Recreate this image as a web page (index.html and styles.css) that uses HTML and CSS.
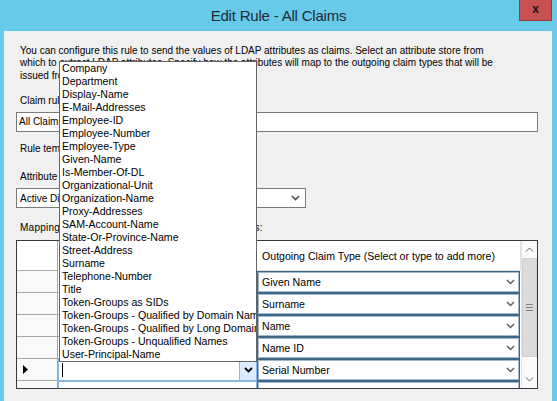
FILE: index.html
```html
<!DOCTYPE html>
<html>
<head>
<meta charset="utf-8">
<link rel="stylesheet" href="styles.css">
</head>
<body>
<div class="window">
  <div class="titlebar">
    <span></span>
    <div class="title">Edit Rule - All Claims</div>
    <div class="close">x</div>
  </div>
  <div class="client">
    <p class="desc">You can configure this rule to send the values of LDAP attributes as claims. Select an attribute store from<br>which to extract LDAP attributes. Specify how the attributes will map to the outgoing claim types that will be<br>issued from the rule.</p>
    <div class="lbl lbl-name">Claim rule name:</div>
    <div class="textbox">All Claims</div>
    <div class="lbl lbl-tmpl">Rule template: Send LDAP Attributes as Claims</div>
    <div class="lbl lbl-store">Attribute store:</div>
    <div class="select"><span>Active Directory</span><svg class="chev" width="9" height="6" viewBox="0 0 9 6"><path d="M1 1 L4.5 4.5 L8 1" fill="none" stroke="#505050" stroke-width="1.6"/></svg></div>
    <div class="lbl lbl-map">Mapping of LDAP attributes to outgoing claim types:</div>
    <div class="grid">
      <div class="table">
        <div class="row head">
          <div class="rh"></div>
          <div class="c1 hc">LDAP Attribute (Select or type to add more)</div>
          <div class="c2 hc">Outgoing Claim Type (Select or type to add more)</div>
        </div>
        <div class="row">
          <div class="rh"></div>
          <div class="c1"><div class="cell">Given-Name</div></div>
          <div class="c2"><div class="combo"><span>Given Name</span><svg class="chev" width="9" height="6" viewBox="0 0 9 6"><path d="M1 1 L4.5 4.5 L8 1" fill="none" stroke="#606060" stroke-width="1.5"/></svg></div></div>
        </div>
        <div class="row">
          <div class="rh"></div>
          <div class="c1"><div class="cell">Surname</div></div>
          <div class="c2"><div class="combo"><span>Surname</span><svg class="chev" width="9" height="6" viewBox="0 0 9 6"><path d="M1 1 L4.5 4.5 L8 1" fill="none" stroke="#606060" stroke-width="1.5"/></svg></div></div>
        </div>
        <div class="row">
          <div class="rh"></div>
          <div class="c1"><div class="cell">Display-Name</div></div>
          <div class="c2"><div class="combo"><span>Name</span><svg class="chev" width="9" height="6" viewBox="0 0 9 6"><path d="M1 1 L4.5 4.5 L8 1" fill="none" stroke="#606060" stroke-width="1.5"/></svg></div></div>
        </div>
        <div class="row">
          <div class="rh"></div>
          <div class="c1"><div class="cell">User-Principal-Name</div></div>
          <div class="c2"><div class="combo"><span>Name ID</span><svg class="chev" width="9" height="6" viewBox="0 0 9 6"><path d="M1 1 L4.5 4.5 L8 1" fill="none" stroke="#606060" stroke-width="1.5"/></svg></div></div>
        </div>
        <div class="row">
          <div class="rh"><svg class="cur" width="6" height="9" viewBox="0 0 6 9"><path d="M0 0 L5 4.5 L0 9 Z" fill="#000"/></svg></div>
          <div class="c1"><div class="cell active"><span class="caret"></span><div class="dbtn"><svg width="9" height="6" viewBox="0 0 9 6"><path d="M1 1 L4.5 4.5 L8 1" fill="none" stroke="#000" stroke-width="1.8"/></svg></div></div></div>
          <div class="c2"><div class="combo"><span>Serial Number</span><svg class="chev" width="9" height="6" viewBox="0 0 9 6"><path d="M1 1 L4.5 4.5 L8 1" fill="none" stroke="#606060" stroke-width="1.5"/></svg></div></div>
        </div>
        <div class="row">
          <div class="rh star">*</div>
          <div class="c1"><div class="cell newrow"></div></div>
          <div class="c2"><div class="combo"></div></div>
        </div>
      </div>
      <div class="vscroll">
        <div class="sbtn"><svg width="9" height="5" viewBox="0 0 9 5"><path d="M1 4.5 L4.5 1 L8 4.5" fill="none" stroke="#606060" stroke-width="1"/></svg></div>
        <div class="thumb"><div class="grip"></div></div>
        <div class="track"></div>
        <div class="sbtn"><svg width="9" height="5" viewBox="0 0 9 5"><path d="M1 0.5 L4.5 4 L8 0.5" fill="none" stroke="#606060" stroke-width="1"/></svg></div>
      </div>
    </div>
    <ul class="droplist">
      <li>Company</li>
      <li>Department</li>
      <li>Display-Name</li>
      <li>E-Mail-Addresses</li>
      <li>Employee-ID</li>
      <li>Employee-Number</li>
      <li>Employee-Type</li>
      <li>Given-Name</li>
      <li>Is-Member-Of-DL</li>
      <li>Organizational-Unit</li>
      <li>Organization-Name</li>
      <li>Proxy-Addresses</li>
      <li>SAM-Account-Name</li>
      <li>State-Or-Province-Name</li>
      <li>Street-Address</li>
      <li>Surname</li>
      <li>Telephone-Number</li>
      <li>Title</li>
      <li>Token-Groups as SIDs</li>
      <li>Token-Groups - Qualified by Domain Name</li>
      <li>Token-Groups - Qualified by Long Domain Name</li>
      <li>Token-Groups - Unqualified Names</li>
      <li>User-Principal-Name</li>
    </ul>
  </div>
</div>
</body>
</html>
```

FILE: styles.css
```css
* { box-sizing: border-box; }
html, body { margin: 0; padding: 0; }
body {
  width: 557px;
  height: 401px;
  overflow: hidden;
  font-family: "Liberation Sans", Arial, sans-serif;
  font-size: 10px;
  color: #000;
}
.window {
  width: 557px;
  height: 401px;
  background: #66cae8;
  display: flex;
  flex-direction: column;
}
.titlebar {
  height: 31px;
  flex: none;
  display: grid;
  grid-template-columns: 1fr auto 1fr;
  align-items: start;
}
.title {
  font-size: 15px;
  color: #1d2b35;
  margin-top: 7px;
  letter-spacing: -0.2px;
}
.close {
  justify-self: end;
  margin-right: 5px;
  width: 33px;
  height: 21px;
  background: #c75050;
  border: 1px solid #983a3a;
  border-top: none;
  color: #151515;
  font-weight: bold;
  font-size: 12px;
  line-height: 18px;
  text-align: center;
}
.client {
  flex: 1;
  margin: 0 5px 0 4px;
  background: #f0f0f0;
  position: relative;
  padding: 13.5px 0 0 12px;
}
.desc {
  margin: 0 0 0 4px;
  line-height: 12.5px;
  white-space: nowrap;
}
.lbl {
  margin-left: 4px;
  line-height: 13px;
  white-space: nowrap;
}
.lbl-name { margin-top: 12px; }
.textbox {
  margin-top: 5px;
  width: 522px;
  height: 20px;
  background: #fff;
  border: 1px solid #7a7a7a;
  padding-left: 2px;
  line-height: 18px;
}
.lbl-tmpl { margin-top: 9.5px; }
.lbl-store { margin-top: 15px; }
.select {
  margin-top: 5.5px;
  width: 290px;
  height: 20px;
  background: #fff;
  border: 1px solid #7a7a7a;
  padding: 0 5px 0 3px;
  display: flex;
  align-items: center;
  justify-content: space-between;
}
.lbl-map { margin-top: 12.5px; letter-spacing: 0.25px; }
.grid {
  margin-top: 6.5px;
  width: 522px;
  height: 149px;
  border: 1px solid #3a3a3a;
  display: flex;
  background: #fff;
  font-size: 10.6px;
}
.table {
  flex: 1;
  overflow: hidden;
  display: flex;
  flex-direction: column;
}
.row {
  display: flex;
  height: 22px;
  flex: none;
}
.row.head { height: 30px; }
.rh {
  width: 41px;
  flex: none;
  background: #f9f9f9;
  border-right: 1px solid #a8a8a8;
  border-bottom: 1px solid #a8a8a8;
  display: flex;
  align-items: center;
  padding-left: 6px;
}
.head .rh { background: #fff; }
.c1 { width: 199px; flex: none; }
.c2 { width: 264px; flex: none; }
.hc {
  background: #fff;
  border-right: 1px solid #e0e0e0;
  border-bottom: 1px solid #e0e0e0;
  display: flex;
  align-items: center;
  padding-left: 5px;
  white-space: nowrap;
  overflow: hidden;
}
.cell {
  height: 100%;
  background: #fff;
  border-right: 1px solid #a8a8a8;
  border-bottom: 1px solid #a8a8a8;
  padding-left: 4px;
  display: flex;
  align-items: center;
}
.cell.active, .cell.newrow {
  border: 1px solid #86b9e6;
  padding-left: 3px;
  justify-content: space-between;
  padding-right: 0;
}
.caret {
  width: 1px;
  height: 14px;
  background: #000;
}
.dbtn {
  width: 17px;
  height: 100%;
  background: #dcecfc;
  border-left: 1px solid #86b9e6;
  display: flex;
  align-items: center;
  justify-content: center;
}
.combo {
  height: 100%;
  width: 263px;
  background: #fff;
  border: 1px solid #3e6788;
  box-shadow: inset 0 0 0 1px #9db8cf;
  display: flex;
  align-items: center;
  justify-content: space-between;
  padding: 0 4px 0 4px;
}
.vscroll {
  width: 16px;
  flex: none;
  background: #fafafa;
  border-left: 1px solid #e6e6e6;
  display: flex;
  flex-direction: column;
}
.sbtn {
  height: 17px;
  flex: none;
  display: flex;
  align-items: center;
  justify-content: center;
}
.thumb {
  height: 99px;
  flex: none;
  background: #dadada;
  border: 1px solid #cfcfcf;
  display: flex;
  align-items: center;
  justify-content: center;
}
.grip {
  width: 7px;
  height: 7px;
  border-top: 1px solid #808080;
  border-bottom: 1px solid #808080;
  background: linear-gradient(#808080, #808080) center / 100% 1px no-repeat;
}
.track { flex: 1; }
.droplist {
  position: absolute;
  left: 55px;
  top: 30px;
  width: 198px;
  margin: 0;
  padding: 0;
  list-style: none;
  background: #fff;
  border: 1px solid #646464;
  font-size: 10.6px;
}
.droplist li {
  height: 13px;
  line-height: 13px;
  padding-left: 2px;
  white-space: nowrap;
  overflow: hidden;
}
.cur { display: block; }
.star { font-size: 11px; line-height: 1; align-items: flex-end; }
```
